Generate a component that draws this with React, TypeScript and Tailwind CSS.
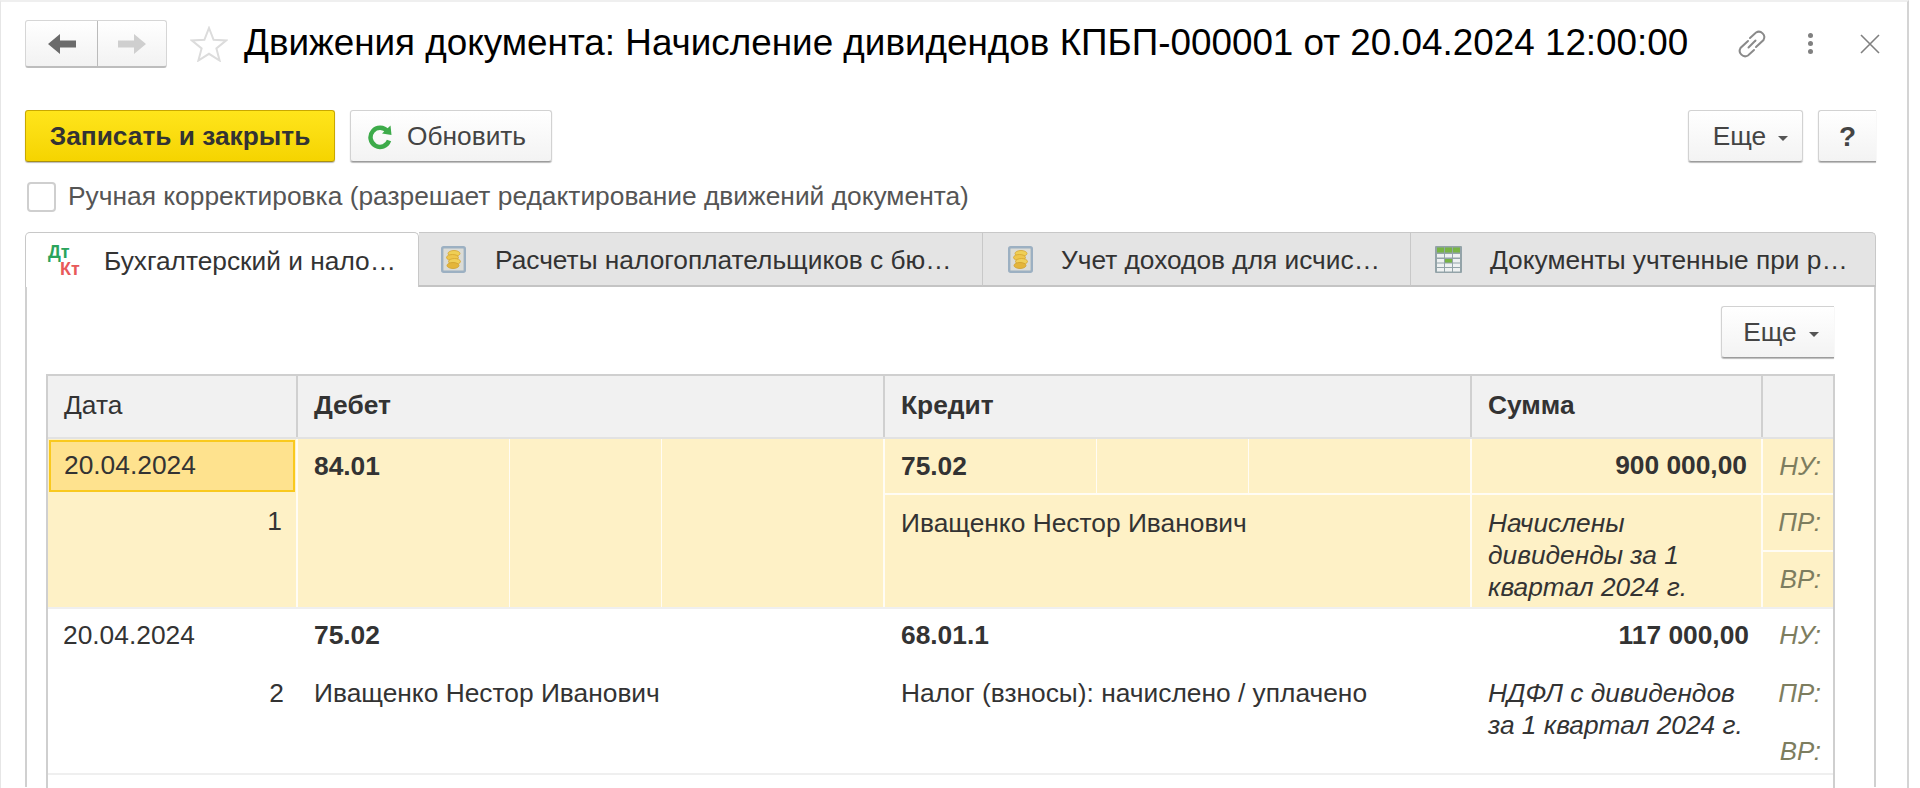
import React from "react";

const F = "font-['Liberation_Sans',Arial,sans-serif]";

function Coins() {
  return (
    <svg width="25" height="27" viewBox="0 0 25 27" className="shrink-0">
      <rect x="1.2" y="1.2" width="22.6" height="24.6" rx="1.5" fill="#dcdcd6" stroke="#9cb0c2" strokeWidth="2.4" />
      <ellipse cx="13" cy="7.5" rx="6" ry="3" fill="#efcf55" stroke="#d5a52e" strokeWidth="0.8" />
      <ellipse cx="11.5" cy="11.5" rx="6" ry="3" fill="#eec64c" stroke="#d5a52e" strokeWidth="0.8" />
      <ellipse cx="13.5" cy="15.5" rx="6" ry="3" fill="#f0cf58" stroke="#d5a52e" strokeWidth="0.8" />
      <ellipse cx="12" cy="19.5" rx="6" ry="3" fill="#e4b53a" stroke="#cf9f2a" strokeWidth="0.8" />
    </svg>
  );
}

function TableIcon() {
  return (
    <svg width="27" height="27" viewBox="0 0 27 27" className="shrink-0">
      <rect x="0" y="0" width="27" height="27" rx="1" fill="#93a3a8" />
      <rect x="2" y="1.5" width="7" height="5" fill="#78b444" />
      <rect x="10" y="1.5" width="7" height="5" fill="#78b444" />
      <rect x="18" y="1.5" width="7" height="5" fill="#78b444" />
      {[8, 13, 17.5, 22].map((y) =>
        [2, 10, 18].map((x) => (
          <rect key={`${x}-${y}`} x={x} y={y} width="7" height="3.5" fill={x === 10 && y === 13 ? "#78b444" : "#eef1f1"} />
        ))
      )}
    </svg>
  );
}

function Caret() {
  return <span className="ml-[12px] mt-[3px] inline-block h-0 w-0 border-x-[5px] border-t-[5px] border-x-transparent border-t-[#555]" />;
}

function Btn({ className = "", children }: { className?: string; children: React.ReactNode }) {
  return (
    <div className={`flex h-[52px] items-center rounded-[3px] border border-[#d2d2d2] border-b-[#9c9c9c] bg-gradient-to-b from-white to-[#f3f3f3] shadow-[0_1px_1px_#bbb] ${className}`}>
      {children}
    </div>
  );
}

function Tab({ w, icon, text, active, last }: { w: string; icon: React.ReactNode; text: string; active?: boolean; last?: boolean }) {
  return (
    <div className={`flex h-[55px] items-center ${w} ${active ? "rounded-t-[5px] border-x border-t border-[#c8c8c8] bg-white" : "border-t border-r border-b-2 border-[#c8c8c8] border-b-[#c4c4c4] bg-[#e4e4e4]"} ${last ? "rounded-tr-[5px]" : ""}`}>
      {icon}
      <span className="whitespace-nowrap pt-[4px] text-[26.3px] text-[#333]">{text}</span>
    </div>
  );
}

function Nu({ t, className = "" }: { t: string; className?: string }) {
  return <div className={`flex items-center justify-end pr-[12px] text-[25.8px] italic text-[#7d7d5f] ${className}`}>{t}</div>;
}

function Head({ w, t, bold, last }: { w: string; t?: string; bold?: boolean; last?: boolean }) {
  return (
    <div className={`flex items-center pb-[1px] pl-[16px] ${w} ${last ? "" : "border-r-2 border-[#d0d0d0]"} ${bold ? "font-bold" : ""}`}>{t}</div>
  );
}

function Row1() {
  const L = "border-white/80";
  return (
    <div className="flex h-[168px] bg-[#fef1c6] text-[26.35px] text-[#333]">
      <div className={`flex w-[250px] shrink-0 flex-col border-r-2 ${L}`}>
        <div className="m-[1px] mb-0 flex h-[52px] items-center border-2 border-[#f9c91e] bg-[#fee28e] pl-[13px]">20.04.2024</div>
        <div className="mt-[13px] pr-[14px] text-right leading-[32px]">1</div>
      </div>
      <div className={`flex w-[587px] shrink-0 border-r-2 ${L}`}>
        <div className={`w-[212px] border-r ${L} pl-[16px] pt-[11px] font-bold leading-[32px]`}>84.01</div>
        <div className={`w-[152px] border-r ${L}`} />
      </div>
      <div className={`flex w-[587px] shrink-0 flex-col border-r-2 ${L}`}>
        <div className={`flex h-[56px] border-b-2 ${L}`}>
          <div className={`w-[212px] border-r ${L} pl-[16px] pt-[11px] font-bold leading-[32px]`}>75.02</div>
          <div className={`w-[152px] border-r ${L}`} />
        </div>
        <div className="pl-[16px] pt-[12px] leading-[32px]">Иващенко Нестор Иванович</div>
      </div>
      <div className={`flex w-[291px] shrink-0 flex-col border-r-2 ${L}`}>
        <div className={`flex h-[56px] items-center justify-end border-b-2 ${L} pr-[14px] font-bold`}>900 000,00</div>
        <div className="pl-[16px] pt-[12px] text-[26.3px] italic leading-[32px]">Начислены<br />дивиденды за 1<br />квартал 2024 г.</div>
      </div>
      <div className="flex flex-1 flex-col">
        <Nu t="НУ:" className={`h-[56px] border-b-2 ${L}`} />
        <Nu t="ПР:" className={`h-[57px] border-b-2 ${L}`} />
        <Nu t="ВР:" className="flex-1" />
      </div>
    </div>
  );
}

function Row2() {
  return (
    <div className="flex h-[166px] border-b-2 border-[#efefef] bg-white text-[26.35px] text-[#333]">
      <div className="w-[250px] shrink-0">
        <div className="flex h-[54px] items-center pl-[15px]">20.04.2024</div>
        <div className="mt-[2px] flex h-[58px] items-center justify-end pr-[14px]">2</div>
      </div>
      <div className="w-[587px] shrink-0 pl-[16px]">
        <div className="flex h-[54px] items-center font-bold">75.02</div>
        <div className="mt-[2px] flex h-[58px] items-center">Иващенко Нестор Иванович</div>
      </div>
      <div className="w-[587px] shrink-0 pl-[16px]">
        <div className="flex h-[54px] items-center font-bold">68.01.1</div>
        <div className="mt-[2px] flex h-[58px] items-center">Налог (взносы): начислено / уплачено</div>
      </div>
      <div className="w-[291px] shrink-0">
        <div className="flex h-[54px] items-center justify-end pr-[14px] font-bold">117 000,00</div>
        <div className="pl-[16px] pt-[14px] text-[26.3px] italic leading-[32px]">НДФЛ с дивидендов<br />за 1 квартал 2024 г.</div>
      </div>
      <div className="flex flex-1 flex-col">
        <Nu t="НУ:" className="h-[54px]" />
        <Nu t="ПР:" className="mt-[2px] h-[58px]" />
        <Nu t="ВР:" className="mt-[8px] h-[44px]" />
      </div>
    </div>
  );
}

export default function App() {
  return (
    <div className={`${F} h-[788px] w-[1920px] overflow-hidden bg-white`}>
      <div className="h-[788px] w-[1909px] border-t-2 border-r-2 border-l border-[#e6e6e6] border-r-[#d4d4d4] border-t-[#efefef] pl-[24px]">
        {/* Title bar */}
        <div className="flex h-[66px] items-end">
          <div className="flex h-[48px] w-[142px] items-stretch rounded-[3px] border border-b-2 border-[#d6d6d6] border-b-[#bdbdbd] bg-gradient-to-b from-white to-[#f2f2f2]">
            <div className="flex w-[72px] items-center justify-center border-r border-[#bbb]">
              <svg width="28" height="22" viewBox="0 0 28 22"><path d="M0 11 L12 1 V7.5 H28 V14.5 H12 V21 Z" fill="#6b6b6b" /></svg>
            </div>
            <div className="flex flex-1 items-center justify-center">
              <svg width="28" height="22" viewBox="0 0 28 22"><path d="M28 11 L16 1 V7.5 H0 V14.5 H16 V21 Z" fill="#cfcfcf" /></svg>
            </div>
          </div>
          <svg width="38" height="36" viewBox="0 0 38 36" className="mb-[6px] ml-[23px]">
            <path d="M19 2 L23.6 13.8 L36 14.5 L26.4 22.4 L29.6 34.5 L19 27.8 L8.4 34.5 L11.6 22.4 L2 14.5 L14.4 13.8 Z" fill="none" stroke="#dcdcdc" strokeWidth="2" />
          </svg>
          <div className="mb-[3px] ml-[16px] whitespace-nowrap text-[36.85px] leading-[44px] text-black">Движения документа: Начисление дивидендов КПБП-000001 от 20.04.2024 12:00:00</div>
          <svg width="32" height="32" viewBox="0 0 32 32" className="mb-[8px] ml-[48px]" fill="none" stroke="#8a8a8a" strokeWidth="2" strokeLinecap="round">
            <path d="M14 10 L20 4.5 A5.5 5.5 0 0 1 27.5 12 L20 19" />
            <path d="M18 22 L12 27.5 A5.5 5.5 0 0 1 4.5 20 L12 13" />
            <path d="M12.5 19.5 L19.5 12.5" />
          </svg>
          <div className="mb-[14px] ml-[40px] flex flex-col gap-[3px]">
            <div className="h-[5px] w-[5px] rounded-full bg-[#808080]" />
            <div className="h-[5px] w-[5px] rounded-full bg-[#808080]" />
            <div className="h-[5px] w-[5px] rounded-full bg-[#808080]" />
          </div>
          <svg width="20" height="20" viewBox="0 0 20 20" className="mb-[14px] ml-[47px]" stroke="#808080" strokeWidth="1.6"><path d="M1 1 L19 19 M19 1 L1 19" /></svg>
        </div>
        {/* Command bar */}
        <div className="mt-[42px] flex w-[1851px] items-center">
          <div className="flex h-[52px] w-[310px] items-center justify-center rounded-[3px] border border-[#c9a800] border-b-[#a98f10] bg-gradient-to-b from-[#ffe51a] to-[#f5d400] pt-[1px] text-[26.3px] font-bold text-[#333] shadow-[0_1px_1px_#bbb]">Записать и закрыть</div>
          <Btn className="ml-[15px] w-[202px] pl-[16px] pt-[1px]">
            <svg width="25" height="26" viewBox="0 0 25 26" className="mr-[15px]" fill="none">
              <path d="M20.5 7.5 A9.5 9.5 0 1 0 22 16.5" stroke="#3dab4a" strokeWidth="4.5" />
              <path d="M15 9.5 L24.5 11 L23.5 1.5 Z" fill="#3dab4a" />
            </svg>
            <span className="text-[26.3px] text-[#444]">Обновить</span>
          </Btn>
          <Btn className="ml-auto w-[115px] justify-center pl-[10px] pt-[2px] text-[26.3px] text-[#444]">Еще<Caret /></Btn>
          <div className="ml-[15px] flex h-[52px] w-[58px] items-center justify-center rounded-l-[3px] border-y border-l border-[#d2d2d2] border-b-[#9c9c9c] bg-gradient-to-b from-white to-[#f3f3f3] pt-[2px] text-[28px] font-bold text-[#444] shadow-[0_1px_1px_#bbb]">?</div>
        </div>
        {/* Checkbox */}
        <div className="mt-[20px] flex h-[30px] items-center">
          <div className="ml-[2px] h-[30px] w-[29px] rounded-[4px] border-2 border-[#cfcfcf] bg-white" />
          <span className="ml-[12px] whitespace-nowrap text-[26.35px] text-[#555]">Ручная корректировка (разрешает редактирование движений документа)</span>
        </div>
        {/* Tabs */}
        <div className="mt-[20px] flex w-[1851px]">
          <Tab w="w-[394px]" active icon={
            <svg width="34" height="34" viewBox="0 0 34 34" className="ml-[22px] mr-[22px] shrink-0 overflow-visible">
              <text x="0" y="15" fontSize="18" fontWeight="700" fill="#2aa45c">Дт</text>
              <text x="12" y="32" fontSize="18" fontWeight="700" fill="#e85a5a">Кт</text>
            </svg>
          } text="Бухгалтерский и нало…" />
          <Tab w="w-[564px]" icon={<div className="ml-[22px] mr-[29px]"><Coins /></div>} text="Расчеты налогоплательщиков с бю…" />
          <Tab w="w-[428px]" icon={<div className="ml-[25px] mr-[28px]"><Coins /></div>} text="Учет доходов для исчис…" />
          <Tab w="w-[465px]" last icon={<div className="ml-[24px] mr-[28px]"><TableIcon /></div>} text="Документы учтенные при р…" />
        </div>
        {/* Panel */}
        <div className="h-[500px] w-[1851px] border-x-2 border-[#d0d0d0] pl-[19px]">
          <div className="flex h-[87px] w-[1788px] items-start justify-end pt-[19px]">
            <div className="flex h-[52px] w-[113px] items-center justify-center rounded-l-[3px] border-y border-l border-[#d2d2d2] border-b-[#9c9c9c] bg-gradient-to-b from-white to-[#f3f3f3] pl-[6px] pt-[2px] text-[26.3px] text-[#444] shadow-[0_1px_1px_#bbb]">Еще<Caret /></div>
          </div>
          <div className="h-[420px] w-[1789px] border-x-2 border-t-2 border-[#cfcfcf]">
            <div className="flex h-[63px] border-b-2 border-[#e2e2e2] bg-[#f1f1f1] text-[26.35px] text-[#333]">
              <Head w="w-[250px] shrink-0" t="Дата" />
              <Head w="w-[587px] shrink-0" t="Дебет" bold />
              <Head w="w-[587px] shrink-0" t="Кредит" bold />
              <Head w="w-[291px] shrink-0" t="Сумма" bold />
              <Head w="flex-1" last />
            </div>
            <Row1 />
            <div className="h-[2px] bg-[#efefef]" />
            <Row2 />
          </div>
        </div>
      </div>
    </div>
  );
}
